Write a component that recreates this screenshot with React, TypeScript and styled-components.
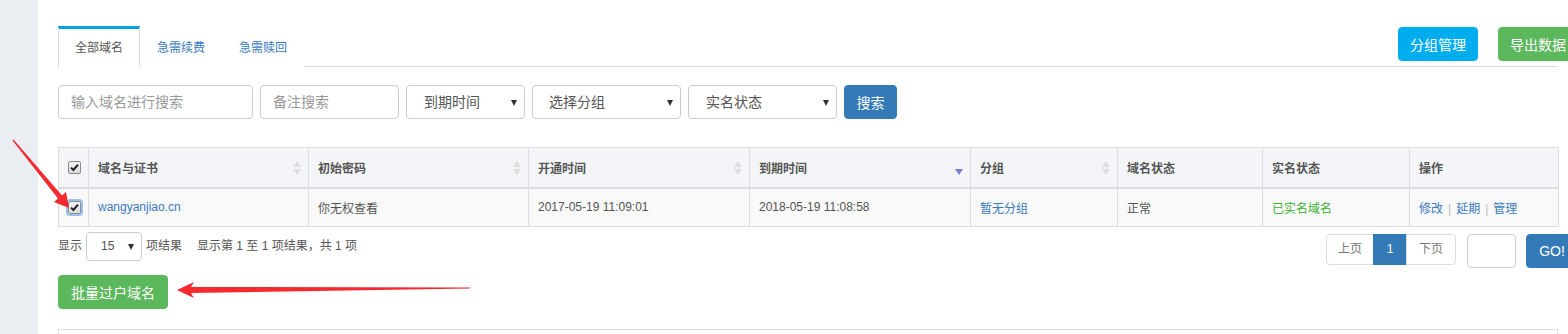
import React from 'react';
import styled, { createGlobalStyle } from 'styled-components';

const GlobalStyle = createGlobalStyle`
  html, body {
    margin: 0;
    padding: 0;
    background: #fff;
    overflow: hidden;
  }
  body {
    font-family: 'Liberation Sans', 'Noto Sans CJK SC', sans-serif;
    font-size: 12px;
    color: #555;
  }
  * {
    box-sizing: border-box;
  }
`;

const Page = styled.div`
  position: relative;
  display: flex;
  width: 1568px;
  height: 334px;
  overflow: hidden;
`;

const Sidebar = styled.div`
  width: 38px;
  flex-shrink: 0;
  background: #eaedf1;
`;

const Main = styled.div`
  flex: 1;
  min-width: 0;
  padding: 26px 10px 0 20px;
`;

const TabBar = styled.div`
  display: flex;
  align-items: flex-start;
  height: 41px;
  border-bottom: 1px solid #ddd;
`;

const Tab = styled.div<{ $active?: boolean }>`
  height: 41px;
  padding: 0 16px;
  line-height: 38px;
  color: ${(p) => (p.$active ? '#555' : '#3a7bbf')};
  background: #fff;
  border: 1px solid ${(p) => (p.$active ? '#ddd' : 'transparent')};
  border-top: 3px solid ${(p) => (p.$active ? '#00a0e9' : 'transparent')};
  border-bottom: none;
  margin-bottom: -1px;
`;

const TopActions = styled.div`
  margin-left: auto;
  margin-right: -20px;
  margin-top: 1px;
  display: flex;
  gap: 20px;
`;

const Button = styled.button<{ $bg: string; $w?: number; $h?: number }>`
  width: ${(p) => p.$w ?? 80}px;
  height: ${(p) => p.$h ?? 34}px;
  padding: 0;
  border: 1px solid ${(p) => p.$bg};
  border-radius: 4px;
  background: ${(p) => p.$bg};
  color: #fff;
  font-family: inherit;
  font-size: 14px;
  flex-shrink: 0;
`;

const SearchRow = styled.div`
  display: flex;
  gap: 7px;
  margin-top: 18px;
`;

const Input = styled.div<{ $w: number }>`
  width: ${(p) => p.$w}px;
  height: 34px;
  border: 1px solid #ccc;
  border-radius: 4px;
  padding: 0 12px;
  line-height: 32px;
  color: #999;
  font-size: 14px;
`;

const Select = styled.div<{ $w: number; $pad?: number }>`
  position: relative;
  width: ${(p) => p.$w}px;
  height: 34px;
  border: 1px solid #ccc;
  border-radius: 4px;
  padding: 0 0 0 ${(p) => p.$pad ?? 16}px;
  line-height: 32px;
  color: #555;
  font-size: 14px;
  &::after {
    content: '';
    position: absolute;
    right: 7px;
    top: 14px;
    border-left: 3.5px solid transparent;
    border-right: 3.5px solid transparent;
    border-top: 6px solid #333;
  }
`;

const Table = styled.table`
  margin-top: 28px;
  width: 1500px;
  border-collapse: collapse;
  table-layout: fixed;
`;

const Th = styled.th`
  position: relative;
  height: 40px;
  padding: 0 9px;
  text-align: left;
  font-weight: bold;
  color: #555;
  background: #f4f5f8;
  border: 1px solid #ddd;
  border-bottom: 2px solid #ddd;
`;

const Td = styled.td`
  height: 39px;
  padding: 0 9px;
  color: #555;
  background: #f9f9f9;
  border: 1px solid #ddd;
`;

const Link = styled.a<{ $color?: string }>`
  color: ${(p) => p.$color ?? '#3a7bbf'};
  text-decoration: none;
`;

const Sep = styled.span`
  color: #bbb;
  margin: 0 5px;
`;

const SortIcon = styled.span<{ $desc?: boolean }>`
  position: absolute;
  right: 7px;
  top: 13px;
  display: flex;
  flex-direction: column;
  gap: 2px;
  &::before,
  &::after {
    content: '';
    border-left: 4px solid transparent;
    border-right: 4px solid transparent;
  }
  &::before {
    border-bottom: 6px solid ${(p) => (p.$desc ? 'transparent' : '#ddd')};
  }
  &::after {
    border-top: 6px solid ${(p) => (p.$desc ? '#7b7bd6' : '#ddd')};
  }
`;

const Check = styled.span<{ $focus?: boolean }>`
  display: inline-flex;
  align-items: center;
  justify-content: center;
  width: 13px;
  height: 13px;
  border: 1px solid #8a8a8a;
  border-radius: 2px;
  background: linear-gradient(#f4f4f4, #dcdcdc);
  outline: ${(p) => (p.$focus ? '2px solid #9cc0ef' : 'none')};
  vertical-align: middle;
`;

const CheckTd = styled(Td)`
  padding: 0 0 0 9px;
`;

const CheckTh = styled(Th)`
  padding: 0 0 0 9px;
`;

const Footer = styled.div`
  display: flex;
  align-items: flex-start;
  height: 29px;
  margin-top: 5px;
  line-height: 29px;
`;

const SmallSelect = styled(Select)`
  height: 29px;
  line-height: 27px;
  margin: 0 4px;
  font-size: 12px;
  &::after {
    top: 11px;
  }
`;

const Info = styled.span`
  margin-left: 15px;
`;

const Pager = styled.div`
  margin-left: auto;
  margin-right: -20px;
  display: flex;
  align-items: flex-start;
  padding-top: 2px;
  line-height: normal;
`;

const PageLink = styled.div<{ $active?: boolean; $w: number }>`
  width: ${(p) => p.$w}px;
  height: 31px;
  line-height: 29px;
  text-align: center;
  border: 1px solid ${(p) => (p.$active ? '#337ab7' : '#ddd')};
  background: ${(p) => (p.$active ? '#337ab7' : '#fff')};
  color: ${(p) => (p.$active ? '#fff' : '#777')};
  &:not(:first-child) {
    margin-left: -1px;
  }
  &:first-child {
    border-radius: 4px 0 0 4px;
  }
  &:nth-child(3) {
    border-radius: 0 4px 4px 0;
  }
`;

const GoInput = styled.div`
  width: 49px;
  height: 34px;
  border: 1px solid #ccc;
  border-radius: 4px;
  margin-left: 11px;
`;

const GoButton = styled(Button)`
  margin-left: 10px;
`;

const BatchButton = styled(Button)`
  margin-top: 14px;
`;

const BottomPanel = styled.div`
  margin-top: 20px;
  height: 40px;
  border: 1px solid #ddd;
`;

const Overlay = styled.svg`
  position: absolute;
  left: 0;
  top: 0;
  pointer-events: none;
`;

const cols = [30, 220, 220, 221, 221, 147, 145, 147, 149];

const Tick = () => (
  <svg width="9" height="9" viewBox="0 0 9 9">
    <path d="M1 4.6 L3.4 7 L8 1.6" fill="none" stroke="#222" strokeWidth="2" />
  </svg>
);

const App = () => (
  <Page>
    <GlobalStyle />
    <Sidebar />
    <Main>
      <TabBar>
        <Tab $active>全部域名</Tab>
        <Tab>急需续费</Tab>
        <Tab>急需赎回</Tab>
        <TopActions>
          <Button $bg="#00adef">分组管理</Button>
          <Button $bg="#5cb85c">导出数据</Button>
        </TopActions>
      </TabBar>

      <SearchRow>
        <Input $w={195}>输入域名进行搜索</Input>
        <Input $w={139}>备注搜索</Input>
        <Select $w={119} $pad={17}>到期时间</Select>
        <Select $w={149} $pad={16}>选择分组</Select>
        <Select $w={149} $pad={17}>实名状态</Select>
        <Button $bg="#337ab7" $w={53}>搜索</Button>
      </SearchRow>

      <Table>
        <colgroup>
          {cols.map((w, i) => (
            <col key={i} style={{ width: w }} />
          ))}
        </colgroup>
        <thead>
          <tr>
            <CheckTh>
              <Check><Tick /></Check>
            </CheckTh>
            <Th>域名与证书<SortIcon /></Th>
            <Th>初始密码<SortIcon /></Th>
            <Th>开通时间<SortIcon /></Th>
            <Th>到期时间<SortIcon $desc /></Th>
            <Th>分组<SortIcon /></Th>
            <Th>域名状态</Th>
            <Th>实名状态</Th>
            <Th>操作</Th>
          </tr>
        </thead>
        <tbody>
          <tr>
            <CheckTd>
              <Check $focus><Tick /></Check>
            </CheckTd>
            <Td><Link>wangyanjiao.cn</Link></Td>
            <Td>你无权查看</Td>
            <Td>2017-05-19 11:09:01</Td>
            <Td>2018-05-19 11:08:58</Td>
            <Td><Link>暂无分组</Link></Td>
            <Td>正常</Td>
            <Td><Link $color="#3cb034">已实名域名</Link></Td>
            <Td>
              <Link>修改</Link>
              <Sep>|</Sep>
              <Link>延期</Link>
              <Sep>|</Sep>
              <Link>管理</Link>
            </Td>
          </tr>
        </tbody>
      </Table>

      <Footer>
        显示
        <SmallSelect $w={56} $pad={14}>15</SmallSelect>
        项结果
        <Info>显示第 1 至 1 项结果，共 1 项</Info>
        <Pager>
          <PageLink $w={48}>上页</PageLink>
          <PageLink $w={34} $active>1</PageLink>
          <PageLink $w={50}>下页</PageLink>
          <GoInput />
          <GoButton $bg="#337ab7" $w={52}>GO!</GoButton>
        </Pager>
      </Footer>

      <BatchButton $bg="#5cb85c" $w={110}>批量过户域名</BatchButton>
      <BottomPanel />
    </Main>

    <Overlay width="1568" height="334">
      <polygon
        points="12.5,140.4 13.5,139.6 62,195.4 66,192 69,208 54,202 58,198.6"
        fill="#f5292e"
      />
      <polygon
        points="177,290 194,282 191,287 470,287.5 470,288.5 191,293 194,298"
        fill="#f5292e"
      />
    </Overlay>
  </Page>
);

export default App;
